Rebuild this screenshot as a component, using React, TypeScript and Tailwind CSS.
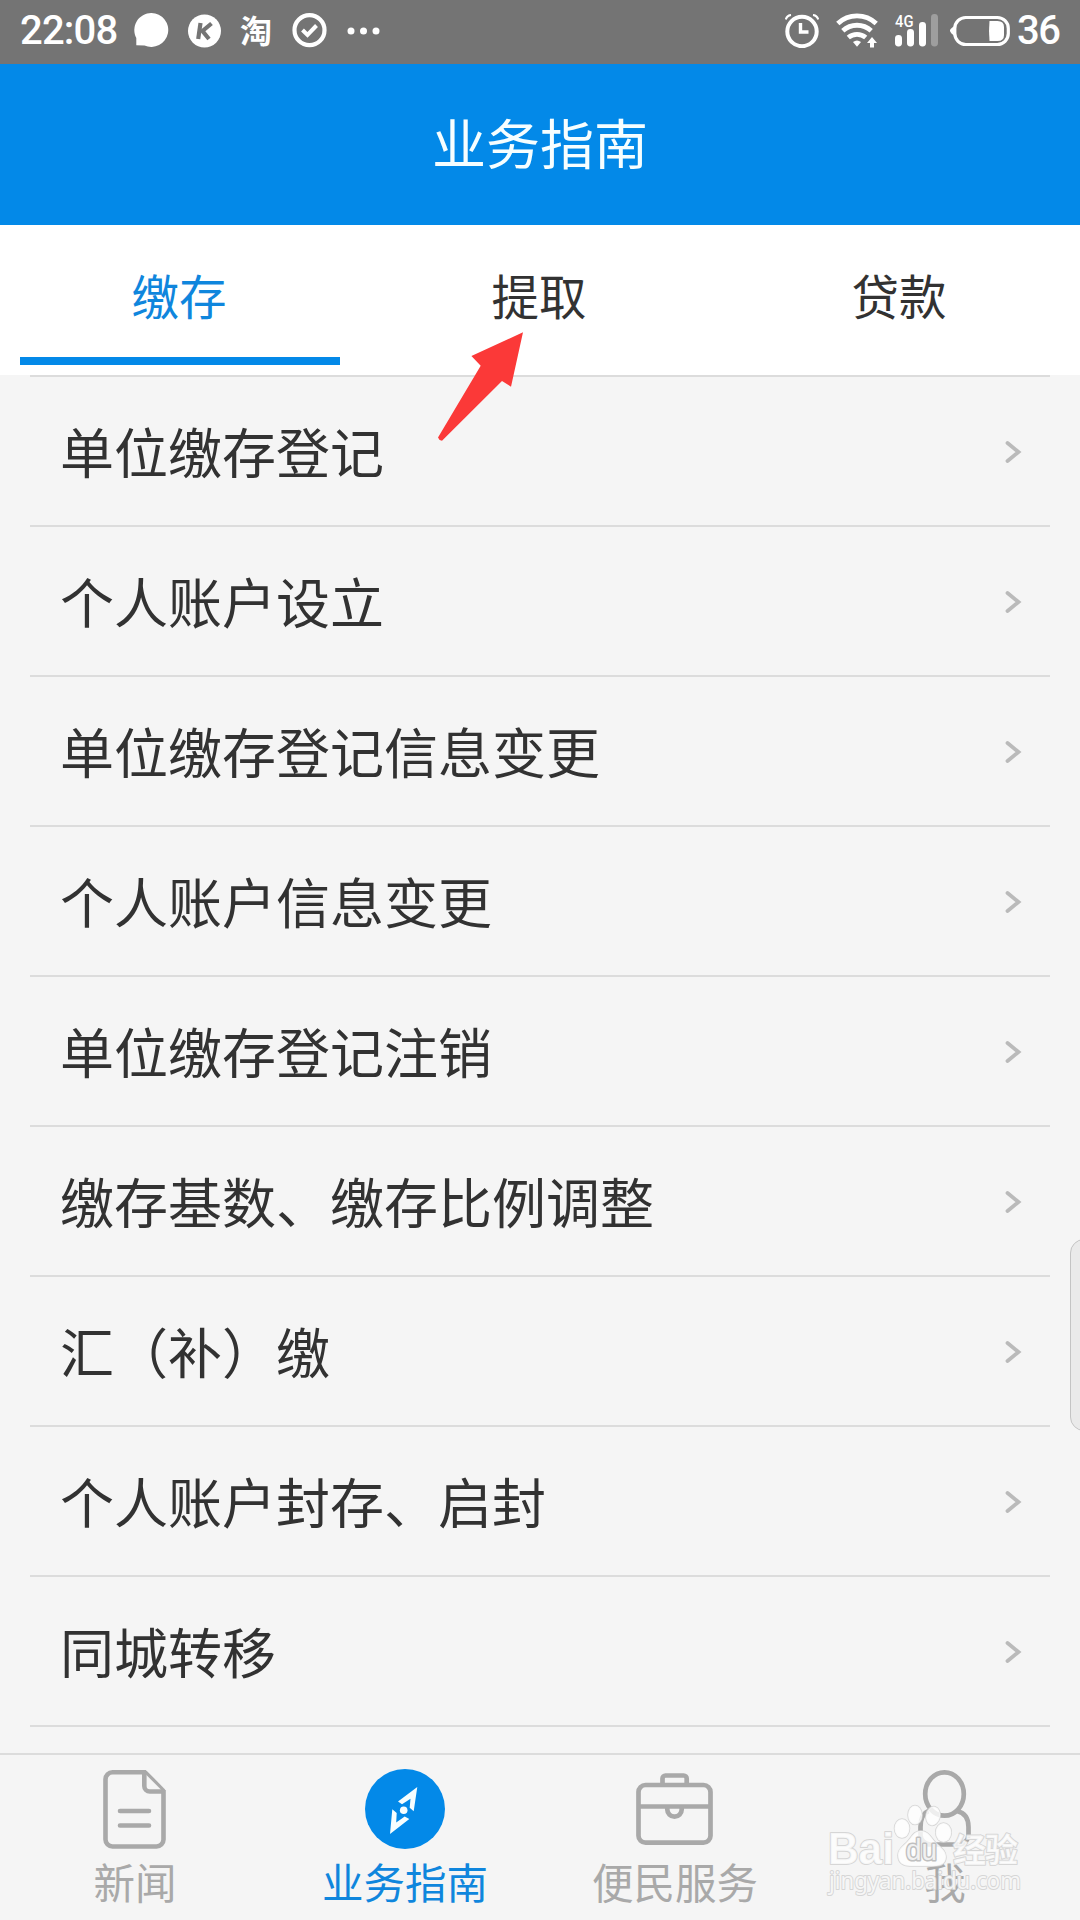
import type { JSX } from "react/jsx-runtime";

type TabItem = {
  id: string;
  label: string;
};

type NavItem = {
  id: string;
  label: string;
  icon: JSX.Element;
};

const tabs: TabItem[] = [
  { id: "deposit", label: "缴存" },
  { id: "withdraw", label: "提取" },
  { id: "loan", label: "贷款" },
];

const guides: string[] = [
  "单位缴存登记",
  "个人账户设立",
  "单位缴存登记信息变更",
  "个人账户信息变更",
  "单位缴存登记注销",
  "缴存基数、缴存比例调整",
  "汇（补）缴",
  "个人账户封存、启封",
  "同城转移",
];

const navItems: NavItem[] = [
  { id: "news", label: "新闻", icon: <NewsIcon /> },
  { id: "guide", label: "业务指南", icon: <CompassIcon /> },
  { id: "service", label: "便民服务", icon: <BriefcaseIcon /> },
  { id: "me", label: "我", icon: <PersonIcon /> },
];

function NewsIcon(): JSX.Element {
  return (
    <svg width="80" height="80" viewBox="0 0 80 80" fill="none" stroke="#a9a9a9" strokeWidth="4.6">
      <path d="M51 3.3H17.5a7 7 0 0 0-7 7v60.2a7 7 0 0 0 7 7h44a7 7 0 0 0 7-7V21" />
      <path d="M51 3.3L68.500 21" strokeWidth="3.2" strokeLinecap="round" />
      <path d="M49.3 3.500v13.500a5.500 5.500 0 0 0 5.500 5.500H68" />
      <path d="M25 42h29M25 56.500h29" strokeLinecap="round" />
    </svg>
  );
}

function CompassIcon(): JSX.Element {
  return (
    <svg width="80" height="80" viewBox="0 0 80 80">
      <circle cx="40" cy="40" r="40" fill="#0389e8" />
      <g fill="#f6feff">
        <path d="M52.3 18L33 32.500l4 2.800 8.500-5.600-.8 9 4 3.600z" />
        <path d="M25 65l2.300-24.800 4.400 3.800-.5 9.500 8.500-6 4.600 2.600z" />
        <circle cx="38.700" cy="41.300" r="3.800" />
      </g>
    </svg>
  );
}

function BriefcaseIcon(): JSX.Element {
  return (
    <svg width="80" height="80" viewBox="0 0 80 80" fill="none" stroke="#a9a9a9" strokeWidth="4.7">
      <rect x="3.5" y="16" width="72" height="57.7" rx="7" />
      <path d="M27.500 15V9.500a3 3 0 0 1 3-3h18.200a3 3 0 0 1 3 3V15M4 37.500h72" />
      <path d="M32.300 38v2.500a7.200 7.200 0 0 0 14.400 0V38" />
    </svg>
  );
}

function PersonIcon(): JSX.Element {
  return (
    <svg width="80" height="80" viewBox="0 0 80 80" fill="none" stroke="#a9a9a9" strokeWidth="4.7">
      <ellipse cx="39.5" cy="25" rx="19.3" ry="21.7" />
      <path d="M23.500 42C17 44.500 15.500 51 15.500 58v8a10 10 0 0 0 10 9.500h28A10 10 0 0 0 63.500 66v-8c0-8-3-14-11.500-16" />
    </svg>
  );
}

function StatusBar(): JSX.Element {
  return (
    <div className="flex h-16 items-start justify-between bg-[#747474] px-5 pt-[13px] font-[Roboto,sans-serif] text-white">
      <div className="flex items-center">
        <span className="w-[114px] text-[40px] font-medium leading-[35px] tracking-[-0.8px]">22:08</span>
        <svg className="mr-[19px]" width="35" height="35" viewBox="0 0 35 35" fill="white">
          <path d="M17.500 0a17 17 0 1 1-7 32.600L2.300 32.300V25A17 17 0 0 1 17.500 0z" />
        </svg>
        <svg className="mr-[18px]" width="34" height="34" viewBox="0 0 34 34">
          <circle cx="16.5" cy="17" r="16.5" fill="white" />
          <g fill="none" stroke="#747474" strokeWidth="4.2">
            <path d="M12.500 9l-2.300 16" />
            <path d="M23.500 9.500L14.500 17l6.500 8" />
          </g>
        </svg>
        <span className="mr-[17px] w-[35px] font-['Noto_Sans_CJK_SC',sans-serif] text-[32px] font-bold leading-[32px]">
          <span className="block pb-[3px]">淘</span>
        </span>
        <svg className="mr-[20px]" width="35" height="35" viewBox="0 0 35 35" fill="none" stroke="white">
          <circle cx="17.5" cy="17.2" r="15" strokeWidth="4.2" />
          <path d="M10.500 17l5 5 9-9.500" strokeWidth="4" />
        </svg>
        <svg width="34" height="8" viewBox="0 0 34 8" fill="white">
          <circle cx="4" cy="4" r="3.5" />
          <circle cx="16.5" cy="4" r="3.5" />
          <circle cx="29" cy="4" r="3.5" />
        </svg>
      </div>

      <div className="flex items-center">
        <svg className="mr-[17px]" width="34" height="34" viewBox="0 0 34 34" fill="none" stroke="white">
          <circle cx="17" cy="17.5" r="14.7" strokeWidth="4" />
          <path d="M15.500 9v9H23.500" strokeWidth="3.4" />
          <path d="M.8 5.500Q2 1.500 6 1M33.200 5.500Q32 1.500 28 1" strokeWidth="2.2" />
        </svg>
        <svg className="mr-[16px]" width="43" height="35" viewBox="0 0 43 35" fill="none" stroke="white" strokeWidth="4.8">
          <path d="M1.800 10.500a28 28 0 0 1 38.400 0" />
          <path d="M6.800 17.800a21 21 0 0 1 28.400 0" />
          <path d="M12.300 24.500a13.500 13.500 0 0 1 17.400 0" />
          <path d="M17 29q4-3 8 0l-4 4.700z" fill="white" stroke="none" />
          <path d="M36 24l5 6h-3v4.500h-4V30h-3z" fill="white" stroke="none" />
        </svg>
        <svg className="mr-[12px] overflow-visible" width="43" height="35" viewBox="0 0 43 35" fill="white">
          <text x="0" y="13.5" fontSize="16.5" fontWeight="500" textLength="18.500" lengthAdjust="spacingAndGlyphs">
            4G
          </text>
          <rect x="0" y="22" width="7" height="11.500" rx="3.400" />
          <rect x="12" y="16" width="7" height="17.500" rx="3.400" />
          <rect x="24" y="9" width="7" height="24.500" rx="3.400" />
          <rect x="36" y="1" width="7" height="32.500" rx="3.400" opacity=".3" />
        </svg>
        <svg className="mr-[7px]" width="60" height="34" viewBox="0 0 60 34">
          <rect x="4.8" y="3.5" width="53.5" height="27" rx="11" fill="none" stroke="white" strokeWidth="3.2" />
          <path d="M5 11.500Q-.5 15 0 17t5 5.500z" fill="white" />
          <path d="M39.500 7h8q6.500 0 6.500 6v8q0 6-6.500 6h-8q-1-10 0-20z" fill="white" />
        </svg>
        <span className="w-[43px] text-[40px] font-medium leading-[34px] tracking-[-1.5px]">36</span>
      </div>
    </div>
  );
}

function Tabs(): JSX.Element {
  return (
    <div className="grid h-[150px] grid-cols-3 bg-white text-[47.5px]">
      {tabs.map((tab, index) => (
        <div
          key={tab.id}
          className={`mx-5 flex h-[140px] items-center justify-center border-b-8 pr-[2px] pt-[7px] ${index === 0 ? "border-[#0389e8] text-[#0f86dd]" : "border-transparent text-[#323232]"}`}
        >
          {tab.label}
        </div>
      ))}
    </div>
  );
}

function GuideList(): JSX.Element {
  return (
    <ul className="mx-[30px] h-[1378px] border-t-2 border-[#dcdcdc]">
      {guides.map((guide) => (
        <li
          key={guide}
          className="flex h-[150px] items-center justify-between border-b-2 border-[#dcdcdc] pl-[30px] pr-[28px]"
        >
          <span className="pb-[1px] text-[54px] leading-none text-[#323232]">{guide}</span>
          <svg width="18" height="24" viewBox="0 0 18 24" fill="none" stroke="#bababa" strokeWidth="3.8" strokeLinecap="round">
            <path d="M3.500 4l11 9-11 9" />
          </svg>
        </li>
      ))}
    </ul>
  );
}

function BottomNav(): JSX.Element {
  return (
    <nav className="grid h-[167px] grid-cols-4 border-t-2 border-[#dcdcdc]">
      {navItems.map((item) => (
        <div key={item.id} className="flex flex-col items-center pt-[14px]">
          {item.icon}
          <span
            className={`mt-[11px] text-[41.5px] leading-[42px] ${item.id === "guide" ? "text-[#0f86dd]" : "text-[#a9a9a9]"}`}
          >
            {item.label}
          </span>
        </div>
      ))}
    </nav>
  );
}

function Watermark(): JSX.Element {
  return (
    <svg
      className="absolute left-[820px] top-[1800px]"
      width="220"
      height="100"
      viewBox="0 0 220 100"
      fill="white"
      fillOpacity=".8"
      stroke="#d6d6d6"
      strokeWidth="2"
      strokeLinejoin="round"
      paintOrder="stroke"
    >
      <text
        x="8"
        y="64"
        fontFamily="Liberation Sans, Arial, sans-serif"
        fontWeight="700"
        fontSize="44"
        textLength="66"
        lengthAdjust="spacingAndGlyphs"
      >
        Bai
      </text>
      <g strokeWidth="1.500">
        <ellipse cx="82" cy="28.5" rx="7.5" ry="9.5" />
        <ellipse cx="95" cy="15" rx="7" ry="9.5" />
        <ellipse cx="113" cy="16" rx="7" ry="9.5" transform="rotate(12 113 16)" />
        <ellipse cx="123.5" cy="32.5" rx="7.8" ry="9.5" />
        <path d="M101 31c8 0 10 7 16 13 6 5 9 8 9 13 0 7-6 9-12 9H90c-8 0-12-4-12-11 0-6 5-9 9-13 5-5 6-11 14-11z" />
      </g>
      <text
        x="86"
        y="60"
        fontFamily="Liberation Sans, Arial, sans-serif"
        fontSize="29"
        textLength="31"
        lengthAdjust="spacingAndGlyphs"
        stroke="#c0c0c0"
        strokeWidth="3"
      >
        du
      </text>
      <text x="133" y="62" fontFamily="Noto Sans CJK SC, sans-serif" fontWeight="700" fontSize="33" textLength="65">
        经验
      </text>
      <text
        x="9"
        y="89"
        fontFamily="Noto Sans, sans-serif"
        fontSize="24"
        textLength="192"
        lengthAdjust="spacingAndGlyphs"
      >
        jingyan.baidu.com
      </text>
    </svg>
  );
}

export default function App(): JSX.Element {
  return (
    <div className="relative h-[1920px] w-[1080px] overflow-hidden bg-[#f5f5f5] font-['Noto_Sans_CJK_SC',sans-serif]">
      <StatusBar />
      <header className="flex h-[161px] items-center justify-center bg-[#0389e8] pb-[5px]">
        <h1 className="text-[54px] leading-none text-[#f6feff]">业务指南</h1>
      </header>
      <Tabs />
      <GuideList />
      <BottomNav />

      {/* pointer towards the second tab */}
      <svg className="absolute left-[436px] top-[330px]" width="90" height="114" viewBox="0 0 90 114" fill="#fb3938">
        <path d="M87 2.300L35.400 26l9.300 9.700L2 107.500q1 3 4 3.300L66 51l9 5.700z" />
      </svg>

      <div className="absolute left-[1070px] top-[1239px] h-[192px] w-[30px] rounded-[14px] border border-[#c4c4c4] bg-[#eaeaea]" />
      <Watermark />
    </div>
  );
}
